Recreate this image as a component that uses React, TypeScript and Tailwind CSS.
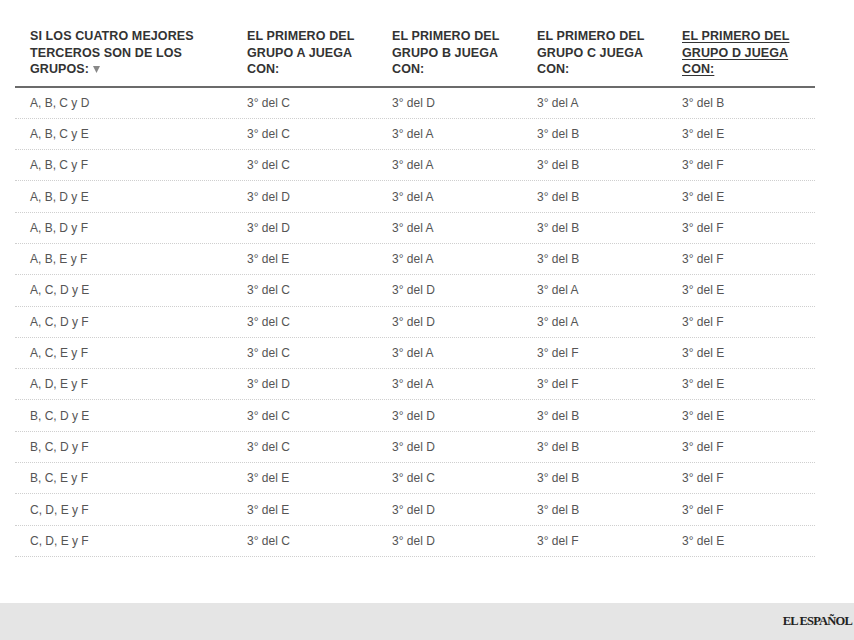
import React from "react";

const rows: [string, string, string, string, string][] = [
  ["A, B, C y D", "C", "D", "A", "B"],
  ["A, B, C y E", "C", "A", "B", "E"],
  ["A, B, C y F", "C", "A", "B", "F"],
  ["A, B, D y E", "D", "A", "B", "E"],
  ["A, B, D y F", "D", "A", "B", "F"],
  ["A, B, E y F", "E", "A", "B", "F"],
  ["A, C, D y E", "C", "D", "A", "E"],
  ["A, C, D y F", "C", "D", "A", "F"],
  ["A, C, E y F", "C", "A", "F", "E"],
  ["A, D, E y F", "D", "A", "F", "E"],
  ["B, C, D y E", "C", "D", "B", "E"],
  ["B, C, D y F", "C", "D", "B", "F"],
  ["B, C, E y F", "E", "C", "B", "F"],
  ["C, D, E y F", "E", "D", "B", "F"],
  ["C, D, E y F", "C", "D", "F", "E"],
];

const grid = "grid grid-cols-[217px_145px_145px_145px_148px]";

export default function App() {
  return (
    <div
      className="w-[854px] h-[640px] bg-white flex flex-col"
      style={{ fontFamily: '"Liberation Sans", Arial, sans-serif' }}
    >
      <div className="ml-[15px] w-[800px] pt-[28px]">
        <div
          className={`${grid} border-b-2 border-[#6b6b6b] pb-[8px] text-[12.5px] tracking-[0.1px] font-bold leading-[16.5px] text-[#333]`}
        >
          <div className="pl-[15px] pr-[10px]">
            SI LOS CUATRO MEJORES TERCEROS SON DE LOS GRUPOS:
            <svg
              className="inline-block ml-[4px] align-[0px]"
              width="7"
              height="7"
              viewBox="0 0 7 7"
            >
              <polygon points="0,0 7,0 3.5,7" fill="#888" />
            </svg>
          </div>
          <div className="pl-[15px] pr-[8px]">EL PRIMERO DEL GRUPO A JUEGA CON:</div>
          <div className="pl-[15px] pr-[8px]">EL PRIMERO DEL GRUPO B JUEGA CON:</div>
          <div className="pl-[15px] pr-[8px]">EL PRIMERO DEL GRUPO C JUEGA CON:</div>
          <div className="pl-[15px] pr-[10px] underline underline-offset-2">
            EL PRIMERO DEL GRUPO D JUEGA CON:
          </div>
        </div>
        {rows.map((r, i) => (
          <div
            key={i}
            className={`${grid} h-[31.3px] items-center border-b border-dotted border-[#cfcfcf] text-[12px] text-[#555]`}
          >
            <div className="pl-[15px]">{r[0]}</div>
            <div className="pl-[15px]">3° del {r[1]}</div>
            <div className="pl-[15px]">3° del {r[2]}</div>
            <div className="pl-[15px]">3° del {r[3]}</div>
            <div className="pl-[15px]">3° del {r[4]}</div>
          </div>
        ))}
      </div>
      <div className="flex-1" />
      <div className="h-[37px] bg-[#e5e5e5] flex items-center justify-end pr-[2px]">
        <span
          className="text-[12.5px] font-bold tracking-[-0.8px] text-[#222]"
          style={{ fontFamily: '"Liberation Serif", "Times New Roman", serif' }}
        >
          EL ESPAÑOL
        </span>
      </div>
    </div>
  );
}
